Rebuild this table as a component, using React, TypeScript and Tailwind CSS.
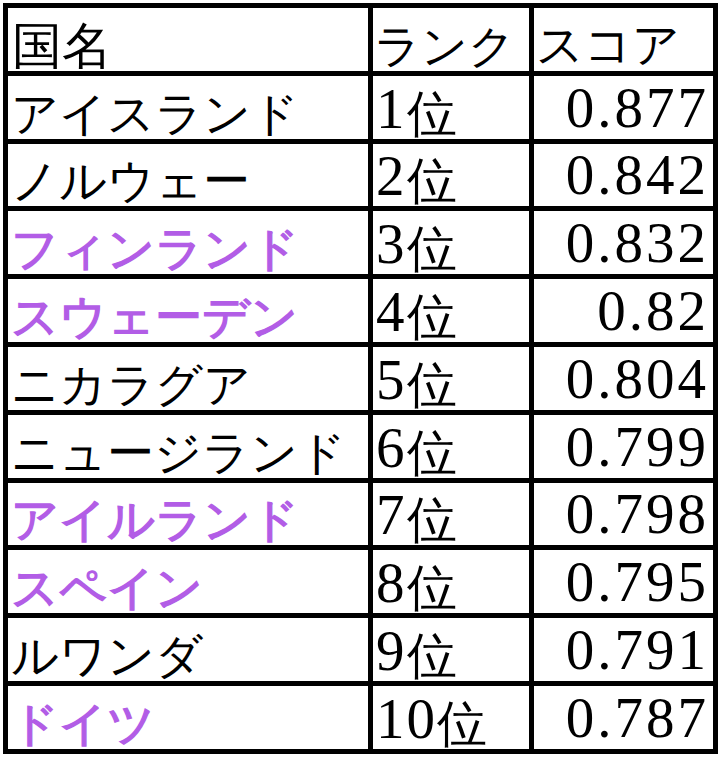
import React from "react";

type Row = { name: string; rank: string; score: string; highlight?: boolean };

const rows: Row[] = [
  { name: "アイスランド", rank: "1位", score: "0.877" },
  { name: "ノルウェー", rank: "2位", score: "0.842" },
  { name: "フィンランド", rank: "3位", score: "0.832", highlight: true },
  { name: "スウェーデン", rank: "4位", score: "0.82", highlight: true },
  { name: "ニカラグア", rank: "5位", score: "0.804" },
  { name: "ニュージランド", rank: "6位", score: "0.799" },
  { name: "アイルランド", rank: "7位", score: "0.798", highlight: true },
  { name: "スペイン", rank: "8位", score: "0.795", highlight: true },
  { name: "ルワンダ", rank: "9位", score: "0.791" },
  { name: "ドイツ", rank: "10位", score: "0.787", highlight: true },
];

// rank cell: digits in serif, 位 in CJK
const Rank = ({ value }: { value: string }) => {
  const num = value.replace("位", "");
  return (
    <span className="flex items-end leading-none">
      <span className="font-[Liberation_Serif,Times_New_Roman,serif] text-[57px] tracking-[2px]">{num}</span>
      <span className="font-sans text-[50px]">位</span>
    </span>
  );
};

export default function App() {
  return (
    <div className="bg-white w-[721px] h-[758px] pt-[3px] pl-[3px] font-sans">
      <div className="grid grid-cols-[360px_156px_179px] auto-rows-[62.8px] gap-[5px] p-[5px] bg-black w-[715px] text-black">
        <div className="bg-white flex items-end pl-[4px] pb-[2px] text-[50px] leading-none">
          国名
        </div>
        <div className="bg-white flex items-end pl-[1px] pb-[4px] text-[46px] leading-none whitespace-nowrap">
          ランク
        </div>
        <div className="bg-white flex items-end pl-[2px] pb-[4px] text-[47px] leading-none">
          スコア
        </div>

        {rows.map((r) => (
          <React.Fragment key={r.rank}>
            <div
              className={`bg-white flex items-end pl-[3px] pb-[3px] text-[47px] leading-none whitespace-nowrap ${
                r.highlight ? "text-[#b25de6] [-webkit-text-stroke:1.4px_#b25de6]" : "text-black"
              }`}
            >
              {r.name}
            </div>
            <div className="bg-white flex items-end pl-[3px] pb-[2px]">
              <Rank value={r.rank} />
            </div>
            <div className="bg-white flex items-end justify-end pr-[4px] pb-[3px] font-[Liberation_Serif,Times_New_Roman,serif] text-[57px] leading-none tracking-[3px]">
              {r.score}
            </div>
          </React.Fragment>
        ))}
      </div>
    </div>
  );
}
